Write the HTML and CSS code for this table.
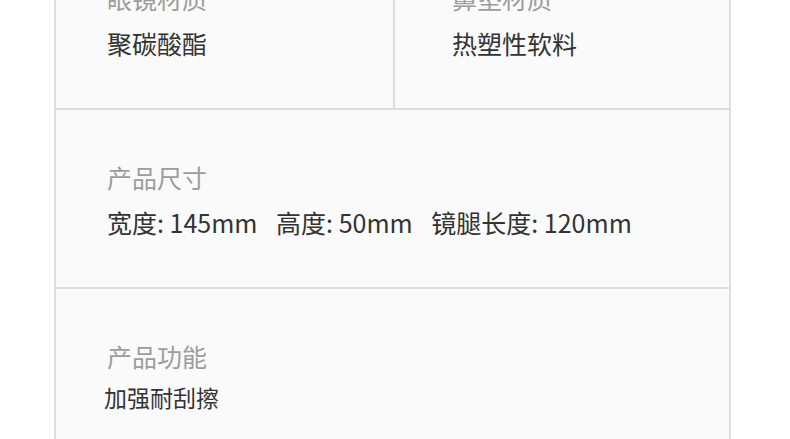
FILE: index.html
```html
<!DOCTYPE html>
<html lang="zh-CN">
<head>
    <meta charset="UTF-8">
    <meta name="viewport" content="width=device-width, initial-scale=1.0">
    <title>产品参数</title>
    <link rel="stylesheet" href="styles.css">
</head>
<body>

<!-- Product spec card -->
<div class="spec-card">

    <!-- Materials -->
    <div class="spec-row spec-split">
        <div class="spec-cell">
            <p class="spec-label">眼镜材质</p>
            <p class="spec-value">聚碳酸酯</p>
        </div>
        <div class="spec-cell spec-cell-right">
            <p class="spec-label">鼻垫材质</p>
            <p class="spec-value">热塑性软料</p>
        </div>
    </div>

    <!-- Size -->
    <div class="spec-row">
        <div class="spec-cell">
            <p class="spec-label">产品尺寸</p>
            <p class="spec-value">
                <span class="size-item">宽度: 145mm</span>
                <span class="size-item">高度: 50mm</span>
                <span class="size-item">镜腿长度: 120mm</span>
            </p>
        </div>
    </div>

    <!-- Function -->
    <div class="spec-row">
        <div class="spec-cell">
            <p class="spec-label">产品功能</p>
            <p class="spec-value spec-value-small">加强耐刮擦</p>
        </div>
    </div>

</div>

</body>
</html>
```

FILE: styles.css
```css
body {
    margin: 0;
    background-color: #ffffff;
    font-family: "Noto Sans CJK SC", "Noto Sans", sans-serif;
    overflow: hidden;
}

p {
    margin: 0;
}

/* Card */
.spec-card {
    width: 673px;
    margin: -69px 0 0 54px;
    background-color: #fafafa;
    border-left: 2px solid #dedede;
    border-right: 2px solid #dedede;
}

.spec-row {
    border-bottom: 2px solid #dedede;
}

.spec-split {
    display: grid;
    grid-template-columns: 337px 1fr;
}

.spec-cell {
    padding: 50px 0 47px 51px;
}

.spec-cell-right {
    border-left: 2px solid #dedede;
    padding-left: 57px;
}

/* Texts */
.spec-label {
    font-size: 25px;
    line-height: 35px;
    color: #9d9d9d;
}

.spec-value {
    margin-top: 10px;
    font-size: 25px;
    line-height: 35px;
    color: #333333;
    white-space: nowrap;
}

.size-item {
    margin-right: 13px;
}

.spec-value-small {
    margin-top: 7px;
    margin-left: -3px;
    font-size: 23px;
    line-height: 33px;
}
```
